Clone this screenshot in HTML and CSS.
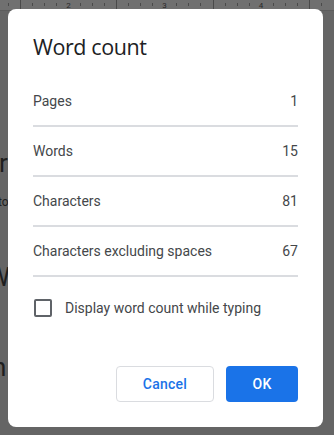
FILE: index.html
```html
<!DOCTYPE html>
<html>
<head>
<meta charset="utf-8">
<link rel="stylesheet" href="styles.css">
</head>
<body>
<div class="ruler">
  <svg width="334" height="10" viewBox="0 0 334 10">
    <g stroke="#4a4a4a" stroke-width="1">
      <line x1="20.5" y1="0" x2="20.5" y2="10"/>
      <line x1="116.5" y1="0" x2="116.5" y2="10"/>
      <line x1="213.5" y1="0" x2="213.5" y2="10"/>
      <line x1="309.5" y1="0" x2="309.5" y2="10"/>
      <line x1="8.5" y1="3" x2="8.5" y2="6"/>
      <line x1="32.5" y1="3" x2="32.5" y2="6"/>
      <line x1="44.5" y1="3" x2="44.5" y2="6"/>
      <line x1="56.5" y1="3" x2="56.5" y2="6"/>
      <line x1="80.5" y1="3" x2="80.5" y2="6"/>
      <line x1="92.5" y1="3" x2="92.5" y2="6"/>
      <line x1="104.5" y1="3" x2="104.5" y2="6"/>
      <line x1="128.5" y1="3" x2="128.5" y2="6"/>
      <line x1="140.5" y1="3" x2="140.5" y2="6"/>
      <line x1="152.5" y1="3" x2="152.5" y2="6"/>
      <line x1="176.5" y1="3" x2="176.5" y2="6"/>
      <line x1="188.5" y1="3" x2="188.5" y2="6"/>
      <line x1="200.5" y1="3" x2="200.5" y2="6"/>
      <line x1="225.5" y1="3" x2="225.5" y2="6"/>
      <line x1="237.5" y1="3" x2="237.5" y2="6"/>
      <line x1="249.5" y1="3" x2="249.5" y2="6"/>
      <line x1="273.5" y1="3" x2="273.5" y2="6"/>
      <line x1="285.5" y1="3" x2="285.5" y2="6"/>
      <line x1="297.5" y1="3" x2="297.5" y2="6"/>
      <line x1="321.5" y1="3" x2="321.5" y2="6"/>
    </g>
    <g fill="#2a2a2a" font-family="Roboto, sans-serif" font-size="8" text-anchor="middle">
      <text x="68.5" y="8">2</text>
      <text x="164.5" y="8">3</text>
      <text x="261" y="8">4</text>
    </g>
  </svg>
</div>
<div class="doc">
  <div class="doc-h1">r</div>
  <div class="doc-p">to</div>
  <div class="doc-h2">W</div>
  <div class="doc-h3">n</div>
</div>

<div class="dialog">
  <h1 class="title">Word count</h1>
  <div class="stats">
    <div class="row"><span>Pages</span><span>1</span></div>
    <div class="row"><span>Words</span><span>15</span></div>
    <div class="row"><span>Characters</span><span>81</span></div>
    <div class="row"><span>Characters excluding spaces</span><span>67</span></div>
  </div>
  <label class="check">
    <span class="box"></span>
    <span class="check-label">Display word count while typing</span>
  </label>
  <div class="actions">
    <button class="btn btn-cancel">Cancel</button>
    <button class="btn btn-ok">OK</button>
  </div>
</div>
</body>
</html>
```

FILE: styles.css
```css
html, body {
  margin: 0;
  padding: 0;
}
body {
  width: 334px;
  height: 435px;
  overflow: hidden;
  background: #656565;
  font-family: Roboto, "Liberation Sans", Arial, sans-serif;
  position: relative;
}
.ruler {
  height: 10px;
  background: #707070;
  border-bottom: 1px solid #5c5c5c;
  overflow: hidden;
}
.ruler svg {
  display: block;
}
.doc {
  color: #1e1e1e;
  font-family: Roboto, "Liberation Sans", sans-serif;
  padding-top: 137px;
}
.doc-h1 {
  font-size: 26px;
  line-height: 30px;
  margin-left: -1px;
}
.doc-p {
  font-size: 12px;
  line-height: 16px;
  margin-top: 16px;
  margin-left: -2px;
}
.doc-h2 {
  font-size: 26px;
  line-height: 30px;
  margin-top: 52px;
  margin-left: -13px;
}
.doc-h3 {
  font-size: 26px;
  line-height: 30px;
  margin-top: 60px;
  margin-left: -8px;
}
.dialog {
  position: absolute;
  left: 8px;
  top: 9px;
  width: 315px;
  height: 418px;
  box-sizing: border-box;
  padding: 24px 25px 25px 25px;
  background: #ffffff;
  border-radius: 8px;
  display: flex;
  flex-direction: column;
}
.title {
  margin: 0;
  font-family: "Open Sans", Roboto, sans-serif;
  font-weight: 400;
  font-size: 21.5px;
  line-height: 28px;
  color: #202124;
  letter-spacing: -0.4px;
}
.stats {
  margin-top: 16px;
}
.row {
  height: 48px;
  border-bottom: 2px solid #dadce0;
  display: flex;
  align-items: center;
  justify-content: space-between;
  font-size: 14px;
  color: #44474a;
}
.check {
  margin-top: 13px;
  height: 36px;
  display: flex;
  align-items: center;
  gap: 13px;
  padding-left: 1px;
}
.box {
  width: 18px;
  height: 18px;
  box-sizing: border-box;
  border: 2px solid #5f6368;
  border-radius: 2px;
}
.check-label {
  font-size: 14px;
  color: #44474a;
}
.actions {
  margin-top: auto;
  display: flex;
  justify-content: flex-end;
  gap: 12px;
}
.btn {
  height: 36px;
  border-radius: 4px;
  font-family: Roboto, "Liberation Sans", sans-serif;
  font-size: 14px;
  font-weight: 500;
  letter-spacing: 0.25px;
  cursor: pointer;
  padding: 0;
}
.btn-cancel {
  width: 98px;
  background: #ffffff;
  border: 1px solid #dadce0;
  color: #1a73e8;
}
.btn-ok {
  width: 72px;
  background: #1a73e8;
  border: none;
  color: #ffffff;
}
```
